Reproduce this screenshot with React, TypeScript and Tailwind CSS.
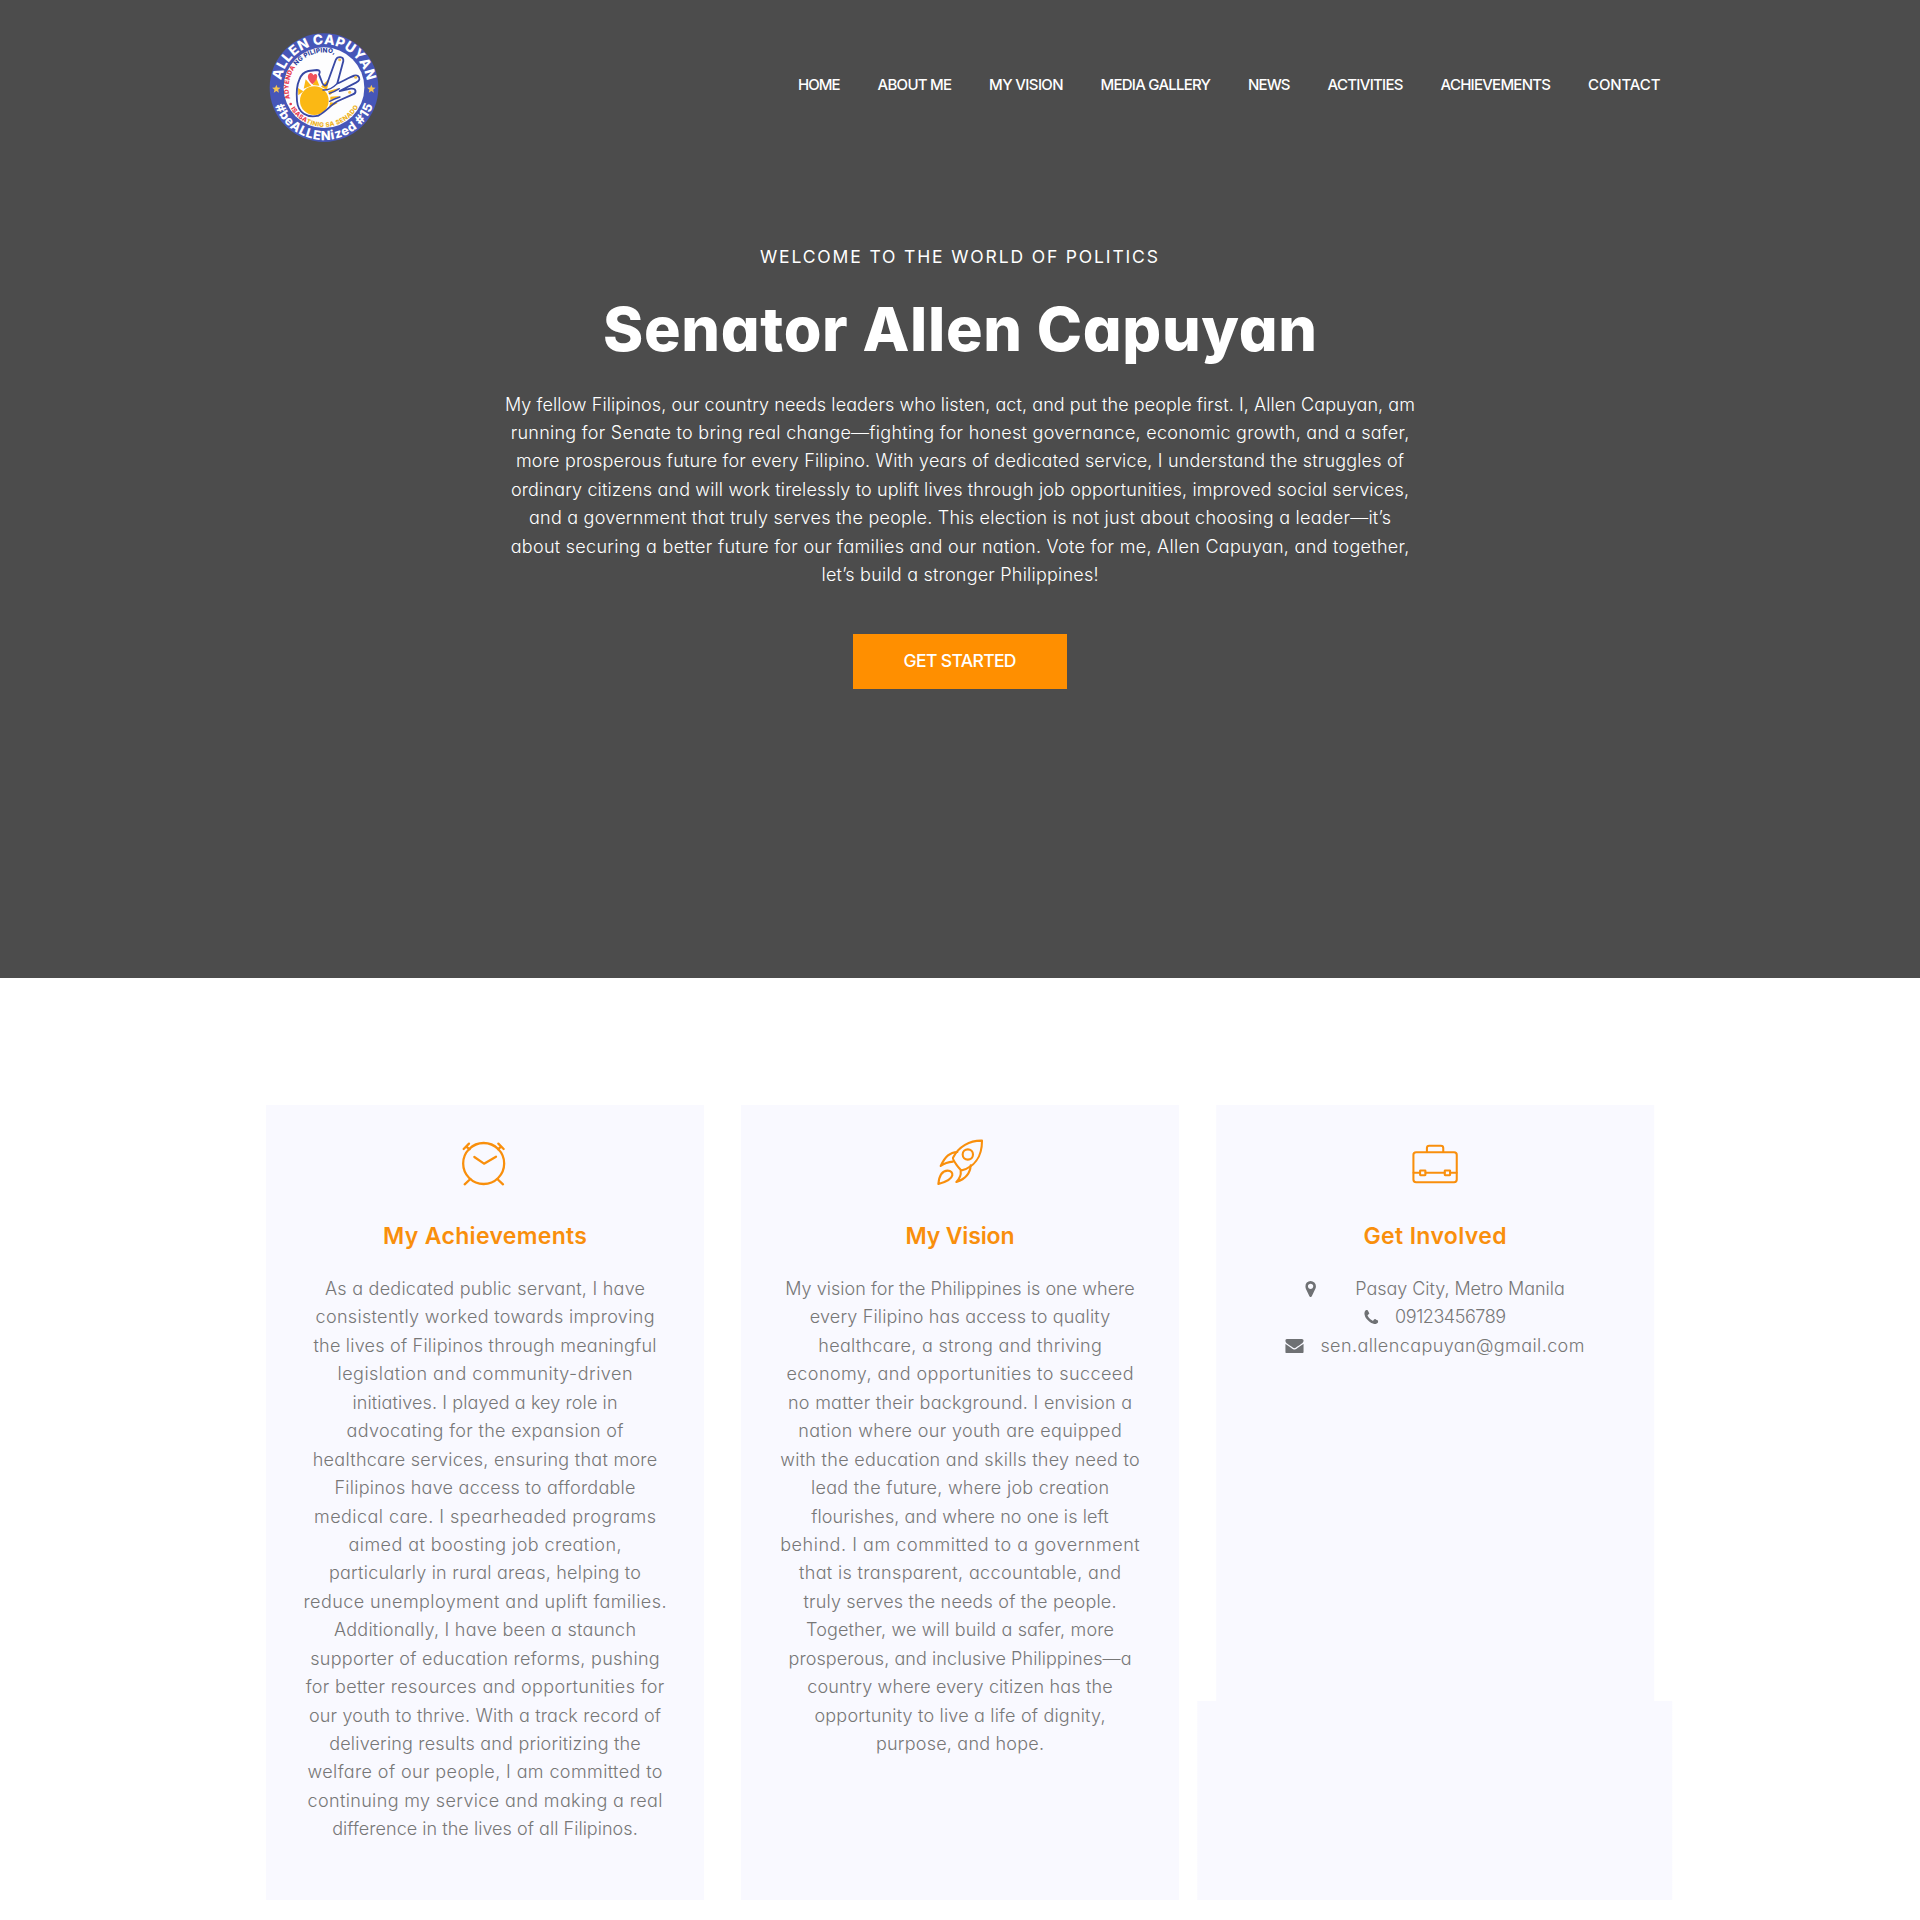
import { useLayoutEffect, useRef, type ReactNode } from "react";

type Row = [text: string, width: number];

/** One line of text, tracked so that it spans the given width. */
function Fit({ text, width, className = "" }: { text: string; width: number; className?: string }) {
  const ref = useRef<HTMLSpanElement>(null);
  useLayoutEffect(() => {
    const el = ref.current;
    if (!el) return;
    el.style.letterSpacing = "0px";
    el.style.marginRight = "0px";
    const natural = el.getBoundingClientRect().width;
    const spacing = (width + 1 - natural) / (text.length - 1);
    el.style.letterSpacing = `${spacing}px`;
    el.style.marginRight = `${-spacing}px`;
  }, [text, width]);
  return (
    <span ref={ref} className={`inline-block whitespace-nowrap ${className}`}>
      {text}
    </span>
  );
}

function Paragraph({ rows, className }: { rows: Row[]; className: string }) {
  return (
    <p className={`flex flex-col items-center text-[18px] leading-[28.4375px] ${className}`}>
      {rows.map(([text, width]) => (
        <Fit key={text} text={text} width={width} />
      ))}
    </p>
  );
}

const nav: Row[] = [
  ["HOME", 41.5],
  ["ABOUT ME", 73.5],
  ["MY VISION", 73.5],
  ["MEDIA GALLERY", 109.5],
  ["NEWS", 41.5],
  ["ACTIVITIES", 75],
  ["ACHIEVEMENTS", 109.5],
  ["CONTACT", 71.5],
];

const intro: Row[] = [
  ["My fellow Filipinos, our country needs leaders who listen, act, and put the people first. I, Allen Capuyan, am", 909],
  ["running for Senate to bring real change—fighting for honest governance, economic growth, and a safer,", 897.5],
  ["more prosperous future for every Filipino. With years of dedicated service, I understand the struggles of", 887],
  ["ordinary citizens and will work tirelessly to uplift lives through job opportunities, improved social services,", 897],
  ["and a government that truly serves the people. This election is not just about choosing a leader—it’s", 861],
  ["about securing a better future for our families and our nation. Vote for me, Allen Capuyan, and together,", 897.5],
  ["let’s build a stronger Philippines!", 276],
];

const achievements: Row[] = [
  ["As a dedicated public servant, I have", 319],
  ["consistently worked towards improving", 338],
  ["the lives of Filipinos through meaningful", 342],
  ["legislation and community-driven", 294],
  ["initiatives. I played a key role in", 264],
  ["advocating for the expansion of", 276],
  ["healthcare services, ensuring that more", 343.5],
  ["Filipinos have access to affordable", 300],
  ["medical care. I spearheaded programs", 341],
  ["aimed at boosting job creation,", 272],
  ["particularly in rural areas, helping to", 311],
  ["reduce unemployment and uplift families.", 362],
  ["Additionally, I have been a staunch", 301],
  ["supporter of education reforms, pushing", 348.5],
  ["for better resources and opportunities for", 357.5],
  ["our youth to thrive. With a track record of", 351],
  ["delivering results and prioritizing the", 310.5],
  ["welfare of our people, I am committed to", 354],
  ["continuing my service and making a real", 354],
  ["difference in the lives of all Filipinos.", 304.5],
];

const vision: Row[] = [
  ["My vision for the Philippines is one where", 348.5],
  ["every Filipino has access to quality", 299.5],
  ["healthcare, a strong and thriving", 282.5],
  ["economy, and opportunities to succeed", 346],
  ["no matter their background. I envision a", 343],
  ["nation where our youth are equipped", 322.5],
  ["with the education and skills they need to", 358.5],
  ["lead the future, where job creation", 297],
  ["flourishes, and where no one is left", 296.5],
  ["behind. I am committed to a government", 358.5],
  ["that is transparent, accountable, and", 321],
  ["truly serves the needs of the people.", 312],
  ["Together, we will build a safer, more", 307],
  ["prosperous, and inclusive Philippines—a", 342],
  ["country where every citizen has the", 304.5],
  ["opportunity to live a life of dignity,", 290],
  ["purpose, and hope.", 167],
];

function Logo() {
  return (
    <svg viewBox="0 0 420 420" className="h-[140px] w-[140px]" fontFamily="Inter, 'Liberation Sans', sans-serif">
      <defs>
        <path id="ring-top" d="M77 203a130 130 0 0 1 260 0" />
        <path id="ring-bottom" d="M50 203a157 157 0 0 0 314 0" />
        <path id="inner-top" d="M128 274A106 106 0 1 1 313 203" />
        <path id="inner-bottom" d="M89 203a118 118 0 0 0 236 0" />
      </defs>
      <circle cx="207" cy="203" r="163" fill="#4656b8" />
      <circle cx="207" cy="203" r="121" fill="#fdfdfe" />
      <g fill="#fff" fontWeight="800">
        <text fontSize="41">
          <textPath href="#ring-top" startOffset="22" textLength="366">ALLEN CAPUYAN</textPath>
        </text>
        <text fontSize="38">
          <textPath href="#ring-bottom" startOffset="56" textLength="382">#beALLENized #15</textPath>
        </text>
      </g>
      <g fontWeight="800" fontSize="19">
        <text>
          <textPath href="#inner-top" startOffset="44" textLength="232">
            <tspan fill="#e8384d">ADYENDA </tspan>
            <tspan fill="#2c3e9c">NG PILIPINO,</tspan>
          </textPath>
        </text>
        <text>
          <textPath href="#inner-bottom" startOffset="66" textLength="244">
            <tspan fill="#e8384d">ISASA</tspan>
            <tspan fill="#edb21c">TINIG SA SENADO</tspan>
          </textPath>
        </text>
      </g>
      <circle cx="107" cy="252" r="4" fill="#e8384d" />
      <g fill="#f6c452">
        <path d="m64 194 3.400 8.600 9.200.6-7.100 5.900 2.300 9-7.800-5-7.800 5 2.300-9-7.100-5.900 9.200-.6z" />
        <path d="m349 194 3.400 8.600 9.200.6-7.100 5.900 2.300 9-7.800-5-7.800 5 2.300-9-7.100-5.900 9.200-.6z" />
      </g>
      <g fill="#fbb814">
        <circle cx="178" cy="242" r="43" />
        <path d="m130 226-1-22 16 10zM146 206l6-28 17 19zM173 195l10-24 10 26zM198 200l24-24-6 34zM219 214l32-10-27 22zM226 230l30-2-30 13zM226 247l22 3-26 12z" />
      </g>
      <path d="M160 164c6-9 14-4 15 2 6-8 14-2 11 7-3 8-8 14-14 20-8-8-17-20-12-29z" fill="#f0525a" />
      <g fill="none" stroke="#3848a4" strokeWidth="5.500" strokeLinejoin="round" strokeLinecap="round">
        <path d="M190 287c-34 8-61-9-64-44-2-23-3-42 7-64 5-14 13-23 27-26l26-3c9 0 10 7 6 13l10 26c4 9 10 10 14 3l26-72c5-12 24-12 23 3l-18 67c8-2 17-7 28-13 16-8 26-14 34-9 8 7 5 14-6 20l-49 25 33-7c18-2 19 13 5 18l-43 19c-20 10-35 31-59 44" />
        <path d="M204 210c14 1 27-4 42-19M223 220c13-4 20-7 30-14M224 244c12-7 21-10 31-13" strokeWidth="4" />
      </g>
      <g fill="#f6c452">
        <circle cx="254" cy="119" r="4.500" />
        <circle cx="302" cy="172" r="4.500" />
        <circle cx="284" cy="217" r="4.500" />
      </g>
    </svg>
  );
}

function LineIcon({ children }: { children: ReactNode }) {
  return (
    <svg
      viewBox="0 0 270 240"
      className="h-[80px] w-[90px]"
      fill="none"
      stroke="#f98f0c"
      strokeWidth="6.800"
      strokeLinecap="round"
      strokeLinejoin="round"
    >
      {children}
    </svg>
  );
}

function Clock() {
  return (
    <LineIcon>
      <circle cx="131" cy="130.500" r="61.500" />
      <path d="m103 111 29 20 36-21M71 87l16-16M79 80l10 8M175 71l16 16M183 80l-9 8M91 177l-17 16M172 177l17 16" />
    </LineIcon>
  );
}

function Rocket() {
  return (
    <LineIcon>
      <g strokeWidth="6.300" transform="translate(15 0)">
        <path d="M186 62c-37-1-70 18-87 51-2 6 20 37 27 38 34-10 60-38 60-89z" />
        <circle cx="143.500" cy="103.500" r="15.500" />
        <path d="M112 96c-22 1-36 12-50 42 12-9 23-12 37-13M122 152c2 14-3 24-13 34 26-9 42-27 43-50M55 192c3-28 15-40 28-40 10 0 15 6 14 14-3 13-17 20-42 26z" />
      </g>
    </LineIcon>
  );
}

function Briefcase() {
  return (
    <LineIcon>
      <g strokeWidth="6.200">
        <rect x="69.500" y="96.500" width="130" height="90" rx="8" />
        <path d="M110 95V84q0-7 7-7h35q7 0 7 7v11M70 158h19M106 158h57M181 158h18" />
        <rect x="89.500" y="151.500" width="16" height="14" rx="1" />
        <rect x="163.500" y="151.500" width="16" height="14" rx="1" />
      </g>
    </LineIcon>
  );
}

function Glyph({ d, box, className }: { d: string; box: string; className: string }) {
  return (
    <svg viewBox={box} className={`shrink-0 fill-[#6f7174] ${className}`}>
      <path d={d} />
    </svg>
  );
}

const markerPath =
  "M1152 640q0-106-75-181t-181-75-181 75-75 181 75 181 181 75 181-75 75-181zm256 0q0 109-33 179l-364 774q-16 33-47.500 52t-67.500 19-67.500-19-46.500-52l-365-774q-33-70-33-179 0-212 150-362t362-150 362 150 150 362z";
const phonePath =
  "M1600 1240q0 27-10 70.500t-21 68.500q-21 50-122 106-94 51-186 51-27 0-52.500-3.500t-57.500-12.500-47.500-14.500-55.500-20.500-49-18q-98-35-175-83-128-79-264.500-215.500t-215.500-264.500q-48-77-83-175-3-9-18-49t-20.500-55.500-14.500-47.500-12.500-57.500-3.500-52.500q0-92 51-186 56-101 106-122 25-11 68.500-21t70.500-10q14 0 21 3 18 6 53 76 11 19 30 54t35 63.500 31 53.500q3 4 17.500 25t21.500 35.500 7 28.500q0 20-28.500 50t-62 55-62 53-28.500 46q0 9 5 22.500t8.500 20.500 14 24 11.500 19q76 137 174 235t235 174q2 1 19 11.500t24 14 20.500 8.500 22.500 5q18 0 46-28.500t53-62 55-62 50-28.500q14 0 28.500 7t35.500 21.500 25 17.500q25 15 53.500 31t63.500 35 54 30q70 35 76 53 3 7 3 21z";
const envelopePath =
  "M1792 710v794q0 66-47 113t-113 47h-1472q-66 0-113-47t-47-113v-794q44 49 101 87 362 246 497 345 57 42 92.500 65.500t94.500 48 110 24.500h2q51 0 110-24.500t94.500-48 92.500-65.500q170-123 498-345 57-39 100-87zm0-294q0 79-49 151t-122 123q-376 261-468 325-10 7-42.500 31t-54 38.500-52 32.500-57.500 27-50 9h-2q-23 0-50-9t-57.500-27-52-32.500-54-38.500-42.500-31q-91-64-262-182.500t-205-142.500q-62-42-117-115.500t-55-136.500q0-78 41.500-130t118.500-52h1472q65 0 112.500 47t47.500 113z";

function Card({ icon, title, titleWidth, children }: { icon: ReactNode; title: string; titleWidth: number; children: ReactNode }) {
  return (
    <section className="flex h-[795px] w-[437.5px] flex-col items-center bg-[#f9f9ff] pt-[15px]">
      {icon}
      <h4 className="mt-[22px] flex h-[28px] items-center text-[23px] leading-[28px] font-semibold text-[#f98f0c]">
        <Fit text={title} width={titleWidth} />
      </h4>
      {children}
    </section>
  );
}

export default function App() {
  return (
    <div className="h-[1920px] w-[1920px] overflow-hidden bg-white font-[Inter,'Liberation_Sans',sans-serif] [font-feature-settings:'cv11']">
      <div className="h-[978px] bg-[#4c4c4c]">
        <header className="flex justify-between pt-[20px] pr-[259.5px] pl-[255px]">
          <Logo />
          <nav className="mt-[53px] flex h-[24px] items-center gap-[37px] text-[15px] leading-[24px] font-medium text-white">
            {nav.map(([text, width]) => (
              <a key={text} href="#">
                <Fit text={text} width={width} />
              </a>
            ))}
          </nav>
        </header>
        <main className="flex flex-col items-center text-white">
          <h6 className="mt-[86px] text-[17.5px] leading-[22px] font-normal">
            <Fit text="WELCOME TO THE WORLD OF POLITICS" width={397} className="-translate-x-[1px]" />
          </h6>
          <h1 className="mt-[26px] text-[61px] leading-[70px] font-extrabold">
            <Fit text="Senator Allen Capuyan" width={713} />
          </h1>
          <Paragraph rows={intro} className="mt-[26.5px] font-light" />
          <button className="mt-[44.5px] flex h-[55px] w-[214px] items-center justify-center bg-[#ff8f00] pb-[2px] text-[17.5px] leading-[28px] font-medium text-white">
            <Fit text="GET STARTED" width={112} />
          </button>
        </main>
      </div>

      <div className="flex gap-[37.5px] pt-[127px] pl-[266.25px]">
        <Card icon={<Clock />} title="My Achievements" titleWidth={203}>
          <Paragraph rows={achievements} className="mt-[25px] font-light text-[#777777]" />
        </Card>
        <Card icon={<Rocket />} title="My Vision" titleWidth={108}>
          <Paragraph rows={vision} className="mt-[25px] font-light text-[#777777]" />
        </Card>
        <div className="flex w-[475px] -translate-x-[18.75px] flex-col items-center bg-[linear-gradient(#f9f9ff,#f9f9ff)] bg-[length:475px_199px] bg-bottom bg-no-repeat">
          <Card icon={<Briefcase />} title="Get Involved" titleWidth={142}>
            <div className="mt-[25px] flex flex-col text-[18px] leading-[28.4375px] font-light text-[#777777]">
              <div className="flex items-center pl-[20px]">
                <Glyph d={markerPath} box="384 128 1024 1536" className="h-[16px] w-[10.7px]" />
                <Fit text="Pasay City, Metro Manila" width={208.5} className="ml-[39px]" />
              </div>
              <div className="flex items-center pl-[78.5px]">
                <Glyph d={phonePath} box="192 128 1408 1408" className="-mt-[2px] h-[14px] w-[14px]" />
                <Fit text="09123456789" width={110} className="ml-[17px]" />
              </div>
              <div className="flex items-center">
                <Glyph d={envelopePath} box="0 256 1792 1408" className="h-[14.4px] w-[18.3px]" />
                <Fit text="sen.allencapuyan@gmail.com" width={263} className="ml-[16.5px]" />
              </div>
            </div>
          </Card>
        </div>
      </div>
    </div>
  );
}
